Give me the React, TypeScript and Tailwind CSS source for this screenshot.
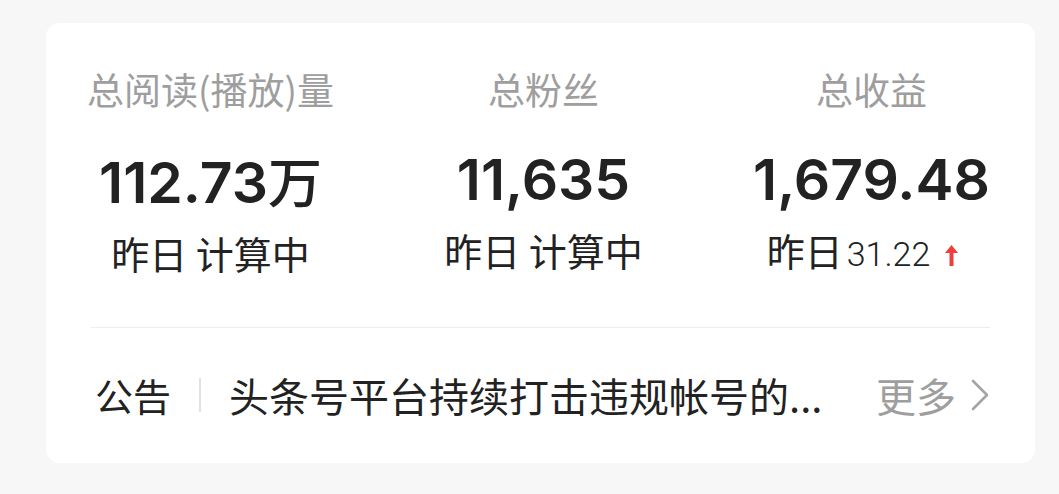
import React from 'react';

const CJK = { fontFamily: '"Noto Sans CJK SC", "Noto Sans", sans-serif' };
const NUM = { fontFamily: 'Inter, "Noto Sans CJK SC", sans-serif' };
const LIGHT = { fontFamily: 'Roboto, "Noto Sans CJK SC", sans-serif' };

interface Stat {
  label: string;
  value: string;
  unit?: string;
  sub: React.ReactNode;
}

function UpArrow() {
  return (
    <svg width="13" height="21" viewBox="0 0 13 21" className="ml-[15px] mr-[18px] mb-[2px]">
      <path d="M6.5 0 L13 8 H8.5 V21 H4.5 V8 H0 Z" fill="#ee3f3f" />
    </svg>
  );
}

function ChevronRight() {
  return (
    <svg width="20" height="32" viewBox="0 0 20 32" fill="none" className="ml-[14px]">
      <path d="M3 2 L17 16 L3 30" stroke="#a3a3a3" strokeWidth="2.6" strokeLinecap="round" strokeLinejoin="round" />
    </svg>
  );
}

export default function App() {
  const stats: Stat[] = [
    { label: '总阅读(播放)量', value: '112.73', unit: '万', sub: '昨日 计算中' },
    { label: '总粉丝', value: '11,635', sub: '昨日 计算中' },
    {
      label: '总收益',
      value: '1,679.48',
      sub: (
        <span className="flex items-baseline">
          昨日
          <span style={LIGHT} className="ml-[4px] text-[34px] font-light">31.22</span>
          <UpArrow />
        </span>
      ),
    },
  ];

  return (
    <div className="w-[1059px] h-[494px] bg-[#f7f7f7] pt-[23px] pl-[46px] pr-[24px]" style={CJK}>
      <div className="bg-white rounded-[14px] h-[440px] pl-[41px] pr-[45px] pt-[42px]">
        {/* Stats */}
        <div className="flex justify-between">
          {stats.map((s) => (
            <div key={s.label} className="flex flex-col items-center">
              <div className="text-[37px] leading-[48px] text-[#9e9e9e]">{s.label}</div>
              <div style={NUM} className="mt-[31px] text-[57px] leading-[72px] font-semibold text-[#222222] flex items-baseline">
                {s.value}
                {s.unit && (
                  <span style={CJK} className="text-[54px] font-medium">{s.unit}</span>
                )}
              </div>
              <div className="mt-[10px] text-[38px] leading-[48px] text-[#222222]">{s.sub}</div>
            </div>
          ))}
        </div>

        {/* Divider */}
        <div className="ml-[4px] mt-[49px] h-px bg-[#eeeeee]" />

        {/* Notice */}
        <div className="mt-[43px] flex items-center h-[48px]">
          <div className="pl-[8px] text-[38px] text-[#222222] leading-[48px]">公告</div>
          <div className="mx-[28px] w-[2px] h-[34px] bg-[#e2e2e2]" />
          <div className="flex-1 min-w-0 whitespace-nowrap text-[40px] leading-[48px] text-[#222222]">
            头条号平台持续打击违规帐号的...
          </div>
          <div className="flex items-center shrink-0">
            <span className="text-[40px] leading-[48px] text-[#9e9e9e]">更多</span>
            <ChevronRight />
          </div>
        </div>
      </div>
    </div>
  );
}
